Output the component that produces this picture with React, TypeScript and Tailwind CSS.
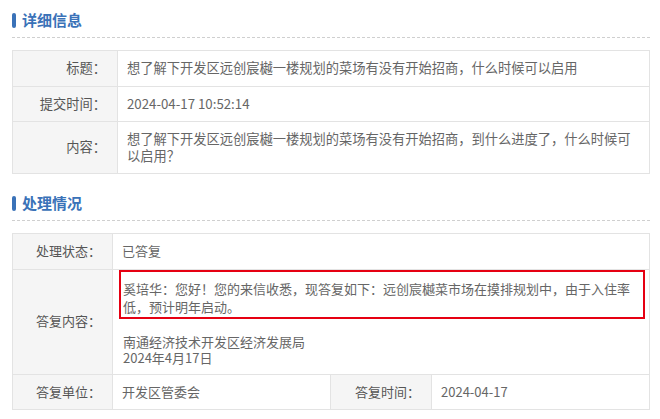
import type { ReactNode } from "react";

const font = { fontFamily: '"Noto Sans CJK SC", "Noto Sans", sans-serif' };

function SectionTitle({ children }: { children: ReactNode }) {
  return (
    <div className="box-content flex h-[20px] items-center gap-[6px] border-b border-dashed border-[#cfcfcf] pb-[7px] pt-[10px]">
      <span className="h-[15px] w-[4px] rounded-[2px] bg-[#3a72b8]" />
      <span className="text-[15px] font-bold leading-[20px] text-[#3a72b8]">{children}</span>
    </div>
  );
}

const labelCls =
  "border border-[#e3e3e3] bg-[#f5f5f5] pr-[11px] text-right align-middle text-[#555] leading-[16.5px] py-[9px]";
const valueCls = "border border-[#e3e3e3] bg-white pl-[9px] pr-[10px] align-middle text-[#666] leading-[16.5px] py-[9px]";

export default function App() {
  return (
    <div className="min-h-[419px] w-[660px] bg-white" style={font}>
      <div className="ml-[12px] w-[638px]">
        <SectionTitle>详细信息</SectionTitle>
        <table className="mt-[12px] w-full table-fixed border-collapse text-[13.25px]">
          <colgroup>
            <col className="w-[105px]" />
            <col />
          </colgroup>
          <tbody>
            <tr>
              <td className={labelCls}>标题：</td>
              <td className={valueCls}>想了解下开发区远创宸樾一楼规划的菜场有没有开始招商，什么时候可以启用</td>
            </tr>
            <tr>
              <td className={labelCls}>提交时间：</td>
              <td className={valueCls}>2024-04-17 10:52:14</td>
            </tr>
            <tr>
              <td className={labelCls}>内容：</td>
              <td className={valueCls}>
                想了解下开发区远创宸樾一楼规划的菜场有没有开始招商，到什么进度了，什么时候可以启用？
              </td>
            </tr>
          </tbody>
        </table>

        <div className="mt-[9px]">
          <SectionTitle>处理情况</SectionTitle>
        </div>
        <table className="mt-[12px] w-full table-fixed border-collapse text-[13px]">
          <colgroup>
            <col className="w-[100px]" />
            <col className="w-[218px]" />
            <col className="w-[101px]" />
            <col />
          </colgroup>
          <tbody>
            <tr>
              <td className={labelCls}>处理状态：</td>
              <td className={valueCls} colSpan={3}>已答复</td>
            </tr>
            <tr>
              <td className={labelCls}>答复内容：</td>
              <td className="border border-[#e3e3e3] bg-white pl-[10px] pr-[10px] pt-0 pb-[7px] align-top text-[#666] leading-[16.5px]" colSpan={3}>
                <div className="ml-[-4px] mr-[-6px] border-2 border-[#e60012] pb-[1px] pl-[2px] pt-[8px] leading-[18px]">
                  奚培华：您好！您的来信收悉，现答复如下：远创宸樾菜市场在摸排规划中，由于入住率低，预计明年启动。
                </div>
                <div className="mt-[15px]">
                  南通经济技术开发区经济发展局
                  <br />
                  2024年4月17日
                </div>
              </td>
            </tr>
            <tr>
              <td className={labelCls}>答复单位：</td>
              <td className={valueCls}>开发区管委会</td>
              <td className={labelCls}>答复时间：</td>
              <td className={valueCls}>2024-04-17</td>
            </tr>
          </tbody>
        </table>
      </div>
    </div>
  );
}
